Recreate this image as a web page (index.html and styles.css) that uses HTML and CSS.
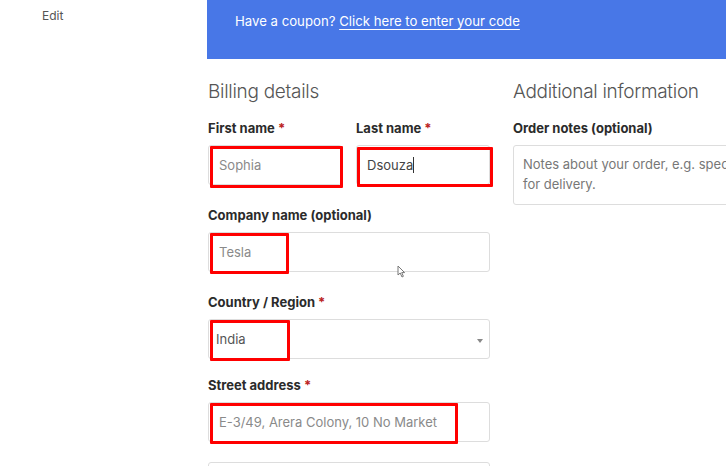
FILE: index.html
```html
<!DOCTYPE html>
<html lang="en">
<head>
  <meta charset="UTF-8" />
  <meta name="viewport" content="width=device-width, initial-scale=1.0" />
  <title>Checkout</title>
  <link rel="stylesheet" href="styles.css">
</head>
<body>
  <div class="page">
    <aside class="sidebar">
      <a class="edit-link" href="#">Edit</a>
    </aside>

    <main class="content">
      <div class="coupon-notice">
        Have a coupon? <a href="#">Click here to enter your code</a>
      </div>

      <div class="checkout">
        <section class="billing">
          <h3>Billing details</h3>

          <div class="row-pair">
            <div class="form-row">
              <label>First name <abbr>*</abbr></label>
              <div class="field marked">
                <span class="value light">Sophia</span>
                <span class="mark" style="left:1px; top:0; width:133px; height:42px"></span>
              </div>
            </div>
            <div class="form-row">
              <label>Last name <abbr>*</abbr></label>
              <div class="field marked">
                <span class="value dark">Dsouza<span class="caret"></span></span>
                <span class="mark" style="left:0; top:1px; width:136px; height:40px"></span>
              </div>
            </div>
          </div>

          <div class="form-row">
            <label>Company name (optional)</label>
            <div class="field marked">
              <span class="value light">Tesla</span>
              <span class="mark" style="left:1px; top:0; width:79px; height:41px"></span>
              <svg class="pointer" width="9" height="13" viewBox="0 0 9 13">
                <path d="M1 1 L1 10 L3.2 8 L5 12 L6.4 11.3 L4.7 7.6 L7.6 7.6 Z" fill="#fff" stroke="#777" stroke-width="1"/>
              </svg>
            </div>
          </div>

          <div class="form-row tight">
            <label>Country / Region <abbr>*</abbr></label>
            <div class="field select marked">
              <span class="value mid">India</span>
              <span class="arrow"></span>
              <span class="mark" style="left:1px; top:0; width:80px; height:41px"></span>
            </div>
          </div>

          <div class="form-row">
            <label>Street address <abbr>*</abbr></label>
            <div class="field marked">
              <span class="value light">E-3/49, Arera Colony, 10 No Market</span>
              <span class="mark" style="left:1px; top:0; width:248px; height:41px"></span>
            </div>
          </div>

          <div class="form-row">
            <div class="field"></div>
          </div>
        </section>

        <section class="additional">
          <h3>Additional information</h3>
          <div class="form-row">
            <label>Order notes (optional)</label>
            <div class="field notes">
              <span class="placeholder">Notes about your order, e.g. special notes for delivery.</span>
            </div>
          </div>
        </section>
      </div>
    </main>
  </div>
</body>
</html>
```

FILE: styles.css
```css
html, body {
  margin: 0;
  height: 100%;
  overflow: hidden;
  background: #fff;
}
body {
  font-family: 'Inter', 'Noto Sans', sans-serif;
  color: #333;
}
.page {
  display: flex;
  min-height: 100%;
}
.sidebar {
  width: 207px;
  flex-shrink: 0;
  padding: 4px 0 0 42px;
  box-sizing: border-box;
}
.edit-link {
  font-size: 12px;
  color: #555;
  text-decoration: none;
}
.content {
  flex: 1;
  min-width: 0;
}
.coupon-notice {
  background-color: #4877e7;
  color: #fff;
  font-size: 13.2px;
  height: 59px;
  box-sizing: border-box;
  padding: 13px 0 0 28px;
}
.coupon-notice a {
  color: #fff;
  text-decoration: underline;
  text-underline-offset: 3px;
  text-decoration-thickness: 1px;
}
.checkout {
  display: grid;
  grid-template-columns: 282px 300px;
  column-gap: 23px;
  padding-left: 1px;
}
h3 {
  font-size: 19px;
  font-weight: 300;
  color: #555;
  margin: 20px 0 13px;
  line-height: 26px;
  letter-spacing: -0.3px;
}
.row-pair {
  display: flex;
  gap: 14px;
}
.row-pair .form-row {
  flex: 1;
}
.form-row {
  margin-bottom: 20px;
}
.form-row.tight {
  margin-bottom: 16px;
}
label {
  display: block;
  font-size: 13px;
  font-weight: 700;
  line-height: 20px;
  margin-bottom: 7px;
  color: #2b2b2b;
}
abbr {
  color: #b22;
  text-decoration: none;
}
.field {
  position: relative;
  height: 40px;
  border: 1px solid #ddd;
  border-radius: 3px;
  box-sizing: border-box;
  display: flex;
  align-items: center;
  padding: 0 10px;
  font-size: 13px;
}
.value.light {
  color: #8a8a8a;
}
.value.mid {
  color: #555;
  margin-left: -3px;
}
.value.dark {
  color: #444;
}
.caret {
  display: inline-block;
  width: 1px;
  height: 16px;
  background: #333;
  vertical-align: -3px;
}
.mark {
  position: absolute;
  border: 3px solid #f00;
  box-sizing: border-box;
  border-radius: 1px;
}
.select .arrow {
  position: absolute;
  right: 6px;
  top: 19px;
  border-left: 3px solid transparent;
  border-right: 3px solid transparent;
  border-top: 4px solid #888;
}
.pointer {
  position: absolute;
  left: 188px;
  top: 32px;
}
.notes {
  height: 60px;
  width: 282px;
  align-items: flex-start;
  padding: 8px 9px;
  line-height: 20px;
}
.placeholder {
  color: #777;
}
```
